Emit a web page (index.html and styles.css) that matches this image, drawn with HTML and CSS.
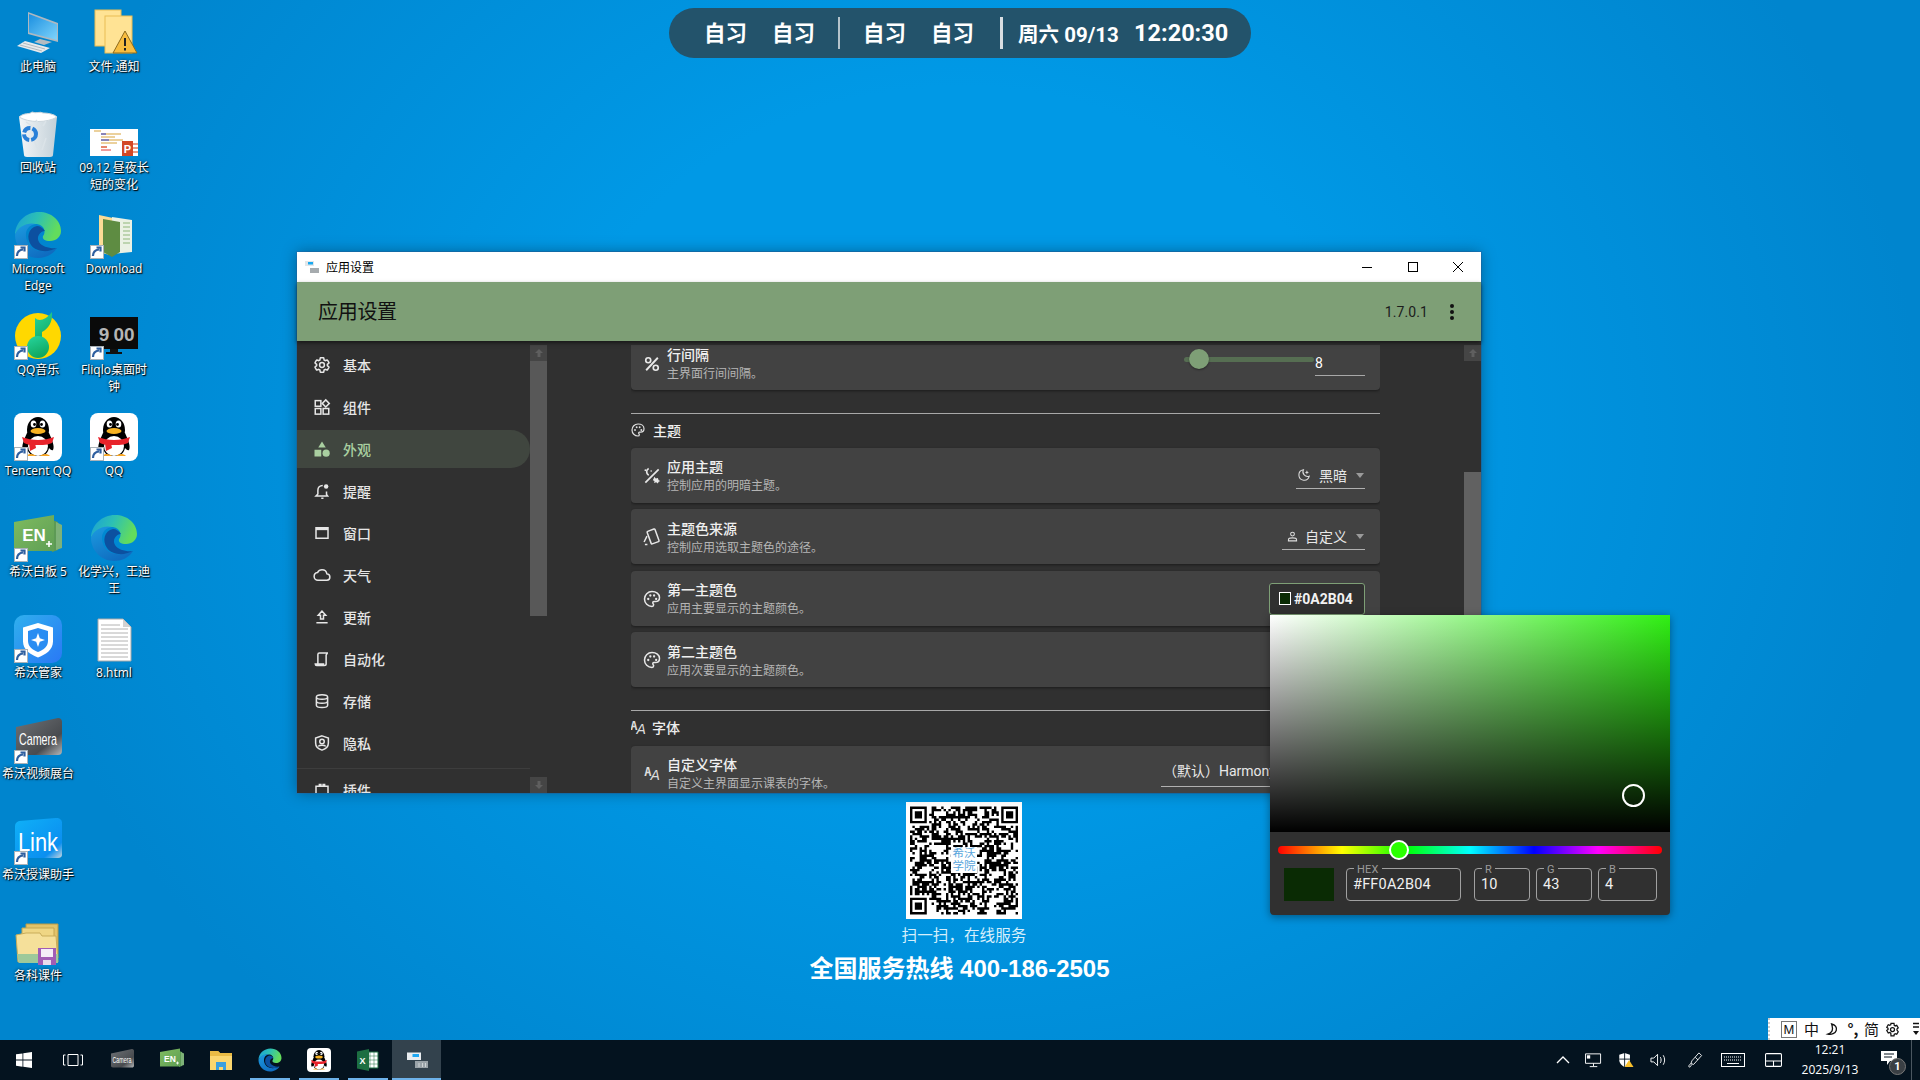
FILE: index.html
```html
<!DOCTYPE html>
<html lang="zh-CN">
<head>
<meta charset="utf-8">
<title>应用设置</title>
<link rel="stylesheet" href="styles.css">
</head>
<body>
<svg class="sprite" aria-hidden="true">
<defs>
<linearGradient id="gEdgeTop" x1="0" y1="0" x2="1" y2="0.3"><stop offset="0" stop-color="#1a9fd8"/><stop offset="0.5" stop-color="#2cc0b4"/><stop offset="1" stop-color="#63dc5c"/></linearGradient>
<linearGradient id="gEdgeLow" x1="0" y1="0" x2="0.6" y2="1"><stop offset="0" stop-color="#1c9be0"/><stop offset="1" stop-color="#0f6cc0"/></linearGradient>
<linearGradient id="gScreen" x1="0" y1="0" x2="1" y2="1"><stop offset="0" stop-color="#1a8fe0"/><stop offset="1" stop-color="#7fd4fb"/></linearGradient>
<linearGradient id="gNote" x1="0" y1="0" x2="0.4" y2="1"><stop offset="0" stop-color="#26d6a0"/><stop offset="1" stop-color="#11a860"/></linearGradient>
<linearGradient id="gShield" x1="0" y1="0" x2="1" y2="1"><stop offset="0" stop-color="#2fb0ee"/><stop offset="1" stop-color="#2a78f5"/></linearGradient>
<linearGradient id="gCam" x1="0" y1="0" x2="1" y2="1"><stop offset="0" stop-color="#6e7276"/><stop offset="0.7" stop-color="#484b4f"/><stop offset="1" stop-color="#b5b7b8"/></linearGradient>
<linearGradient id="gLink" x1="0" y1="0" x2="1" y2="1"><stop offset="0" stop-color="#0fb1f8"/><stop offset="0.8" stop-color="#0b8ff0"/><stop offset="1" stop-color="#c7d5de"/></linearGradient>
<linearGradient id="gEn" x1="0" y1="0" x2="1" y2="1"><stop offset="0" stop-color="#7fbb5f"/><stop offset="1" stop-color="#5f9f55"/></linearGradient>
<linearGradient id="gBin" x1="0" y1="0" x2="1" y2="0"><stop offset="0" stop-color="#f3f6f8"/><stop offset="1" stop-color="#c3d0d8"/></linearGradient>

<symbol id="edge" viewBox="0 0 48 48">
<path fill="url(#gEdgeTop)" d="M1 24C1 11 12 1 25 1c12 0 22 8 22 19 0 6-5 10-11 10-5 0-8-2-7-5 3-3 2-11-6-12C12 12 3 18 1 24z"/>
<path fill="url(#gEdgeLow)" d="M1 24c3-9 13-13 21-11-9 1-12 9-9 17 3 9 15 14 30 7-4 7-12 10-19 10C11 47 1 36 1 24z"/>
<path fill="#0c50a0" d="M23 15c-9 2-11 12-6 19 5 7 17 8 26 3-6 1-15-1-18-6-3-5 1-11 6-11-2-3-5-5-8-5z"/>
</symbol>
<symbol id="lnk" viewBox="0 0 48 48">
<rect x="0.5" y="34.5" width="13" height="13" fill="#fff" stroke="#a9b2b8"/>
<path d="M3 45c0-4 2-6 6-6.500M6.500 36.500h4v4" fill="none" stroke="#2f5f9f" stroke-width="2.200"/>
</symbol>
<symbol id="pc" viewBox="0 0 48 48">
<polygon points="14,3 44,14 44,33 14,25" fill="#aeb8c0"/>
<polygon points="15,5 43,15.500 43,31 15,23.500" fill="url(#gScreen)"/>
<polygon points="26,30 38,33 30,36 20,33" fill="#b4bcc2"/>
<polygon points="11,32 36,39 27,44 3,37" fill="#e6eaed"/>
<path d="M9 34l22 6M6 36l22 6" stroke="#a3acb3" stroke-width="0.800"/>
</symbol>
<symbol id="notice" viewBox="0 0 48 48">
<rect x="5" y="1" width="26" height="36" fill="#ffe394" stroke="#e9bd55"/>
<rect x="15" y="7" width="27" height="37" fill="#ffe394" stroke="#e9bd55"/>
<polygon points="35,22 47,44 23,44" fill="#f7bd40" stroke="#8d6a1b"/>
<rect x="34" y="29" width="2" height="8" fill="#222"/><rect x="34" y="39" width="2" height="2.500" fill="#222"/>
</symbol>
<symbol id="bin" viewBox="0 0 48 48">
<path d="M5 7h38l-4 38c0 1-1 2-3 2H13c-2 0-3-1-3-2z" fill="url(#gBin)"/>
<path d="M5 7c6-5 10-2 13-5 4 2 8-1 11 1 5 0 11 1 14 4-10 6-28 6-38 0z" fill="#fff" stroke="#ccd6dc"/>
<path d="M12 12l6 4M22 10l4 6M32 11l-3 5M20 30l4 10M32 28l-4 12" stroke="#dbe3e8" stroke-width="1.500"/>
<circle cx="16" cy="24" r="6" fill="none" stroke="#2a80d8" stroke-width="4" stroke-dasharray="8 2"/>
</symbol>
<symbol id="ppt" viewBox="0 0 48 48">
<rect x="0" y="19" width="48" height="27" fill="#fff"/>
<path d="M4 21h7M11 24h20M11 27h14M11 30h22M11 33h16M11 37h6" stroke="#d7a33a" stroke-width="1"/>
<path d="M11 24h5M11 30h8" stroke="#2838d0" stroke-width="1"/>
<path d="M11 37h6M11 40h10" stroke="#e23a3a" stroke-width="1"/>
<rect x="32" y="31" width="11" height="15" fill="#d24726"/>
<path d="M43 34h5M43 38h5M43 42h5" stroke="#e67b5c" stroke-width="1.500"/>
<text x="37.500" y="43" class="svg-p">P</text>
</symbol>
<symbol id="dl" viewBox="0 0 48 48">
<path d="M9 4l14 3v38L9 41z" fill="#fbdc96"/>
<path d="M22 6l20 3v32l-20 2z" fill="#eaf1e4"/>
<path d="M13 8l17 3v30l-8 5-9-5z" fill="#5e8c42"/>
<path d="M33 12h7M33 16h7M33 20h7M33 24h7M33 28h7M33 32h7" stroke="#8fb77a" stroke-width="1"/>
</symbol>
<symbol id="qqm" viewBox="0 0 48 48">
<circle cx="24" cy="24" r="23" fill="#ffd800"/>
<path d="M21 6c4 4 11 2 17-6 1 10-4 17-10 20v14h-7z" fill="url(#gNote)"/>
<circle cx="24" cy="35" r="11" fill="url(#gNote)"/>
</symbol>
<symbol id="fliq" viewBox="0 0 48 48">
<rect x="0" y="5" width="48" height="32" fill="#0a0a0a"/>
<text x="14" y="29" class="svg-fl">9</text><text x="34" y="29" class="svg-fl">00</text>
<rect x="20" y="37" width="8" height="3" fill="#111"/><rect x="16" y="40" width="16" height="2" fill="#111"/>
</symbol>
<symbol id="qq" viewBox="0 0 48 48">
<rect width="48" height="48" rx="8" fill="#fff"/>
<ellipse cx="24" cy="17" rx="11" ry="13" fill="#000"/>
<path d="M13 20c-3 7-6 13-4 17 1 1 3-1 4-2 1 5 4 8 11 8s10-3 11-8c1 1 3 3 4 2 2-4-1-10-4-17z" fill="#000"/>
<ellipse cx="24" cy="33" rx="10" ry="10" fill="#fff"/>
<path d="M8 24c10 4 22 4 32 0l-2 6c-3 1-6 2-9 2h-10c-3 0-7-1-9-2z" fill="#e8232b"/>
<path d="M15 30l1 8 6-3-1-5z" fill="#e8232b"/>
<ellipse cx="24" cy="18" rx="7.500" ry="3" fill="#f8b323"/>
<ellipse cx="19.500" cy="11" rx="2.800" ry="3.600" fill="#fff"/><ellipse cx="28.500" cy="11" rx="2.800" ry="3.600" fill="#fff"/>
<circle cx="20.500" cy="11.500" r="1.400" fill="#000"/><circle cx="27.500" cy="11.500" r="1.400" fill="#000"/>
<path d="M12 43c3-3 8-2 10 0zM26 43c2-2 7-3 10 0z" fill="#f8a623"/>
</symbol>
<symbol id="en" viewBox="0 0 48 48">
<path d="M38 6l6 2v28l-6 2z" fill="#5d9a55"/><path d="M42 8l6 3v23l-6 2z" fill="#7eb278"/>
<path d="M0 8L40 1v36H0z" fill="url(#gEn)"/>
<text x="20" y="27" class="svg-en">EN</text>
<path d="M35 33v-6M32 30h6" stroke="#fff" stroke-width="1.600"/>
</symbol>
<symbol id="shield" viewBox="0 0 48 48">
<rect width="48" height="48" rx="10" fill="url(#gShield)"/>
<path d="M24 8l15 4.500v14c0 8-7 13-15 16-8-3-15-8-15-16v-14z" fill="#fff"/>
<path d="M24 13l10 3v10c0 6-5 9-10 11-5-2-10-5-10-11V16z" fill="#2a8df2"/>
<path d="M24 18l1.800 5.200 5.200 1.800-5.200 1.800L24 32l-1.800-5.200-5.200-1.800 5.200-1.800z" fill="#fff"/>
</symbol>
<symbol id="html" viewBox="0 0 48 48">
<path d="M8 4h25l8 8v34H8z" fill="#fff" stroke="#a8a8a8"/>
<path d="M33 4v8h8z" fill="#d2d2d2"/>
<path d="M11 10h19M11 14h27M11 18h27M11 22h27M11 26h27M11 30h27M11 34h27M11 38h27M11 42h27" stroke="#b2b2b2"/>
</symbol>
<symbol id="cam" viewBox="0 0 48 48">
<path d="M2 11L44 2c3 0 4 2 4 4v29c0 3-2 4-4 4H6c-3 0-4-2-4-4z" fill="url(#gCam)"/>
<text x="24" y="29" class="svg-cam" textLength="38" lengthAdjust="spacingAndGlyphs">Camera</text>
</symbol>
<symbol id="link" viewBox="0 0 48 48">
<path d="M1 9c0-3 2-4 4-5L42 1c4 0 6 2 6 5v32c0 2-2 3-4 3H5c-2 0-4-2-4-4z" fill="url(#gLink)"/>
<text x="24" y="34" class="svg-link" textLength="40" lengthAdjust="spacingAndGlyphs">Link</text>
</symbol>
<symbol id="stack" viewBox="0 0 48 48">
<path d="M12 6h32v34H12z" fill="#e2c36a" stroke="#b99a45"/>
<path d="M8 10h32v32H8z" fill="#efd684" stroke="#c4a650"/>
<path d="M2 17l10-2h14l2 3h14l2 26H4z" fill="#f5e09a" stroke="#c9ad5a"/>
<path d="M3 36h41v9H5z" fill="#9dc99a"/>
<rect x="24" y="30" width="18" height="17" fill="#a15db5"/>
<rect x="27" y="31" width="12" height="8" fill="#f4edf7"/><rect x="29" y="42" width="8" height="5" fill="#e9dcec"/>
</symbol>
<symbol id="xls" viewBox="0 0 48 48">
<path d="M22 8h22v32H22z" fill="#fff" stroke="#1d6f42" stroke-width="2"/>
<path d="M28 8v32M36 8v32M22 16h22M22 24h22M22 32h22" stroke="#1d6f42"/>
<path d="M2 7l24-5v44L2 41z" fill="#1d6f42"/>
<text x="13" y="31" class="svg-x">X</text>
</symbol>
<symbol id="cfg" viewBox="0 0 48 48">
<rect x="4" y="9" width="28" height="15" fill="#e9edf0"/><rect x="15" y="12" width="13" height="6" fill="#1ea7f2"/>
<rect x="20" y="26" width="26" height="14" fill="#9aa3a9"/>
<path d="M28 30v8M35 30v8M41 30v8" stroke="#ced3d6" stroke-width="2"/>
</symbol>
<symbol id="palette" viewBox="0 0 24 24">
<path fill="none" stroke="currentColor" stroke-width="1.800" d="M12 3C7 3 3 7 3 12s4 9 9 9c1.200 0 2-.9 2-2 0-.6-.2-1-.6-1.400-.4-.4-.5-.8-.5-1.100 0-.8.6-1.400 1.400-1.400H16c3 0 5-2.200 5-5 0-4.200-4-7.100-9-7.100z"/>
<circle cx="7.500" cy="12" r="1.400" fill="currentColor"/><circle cx="10" cy="7.800" r="1.400" fill="currentColor"/><circle cx="14.500" cy="7.800" r="1.400" fill="currentColor"/><circle cx="17" cy="12" r="1.400" fill="currentColor"/>
</symbol>
<symbol id="pct" viewBox="0 0 24 24">
<path d="M19 4.500L5 19.500" stroke="currentColor" stroke-width="2.200"/>
<circle cx="7.500" cy="7.500" r="3" fill="none" stroke="currentColor" stroke-width="2"/><circle cx="16.500" cy="16.500" r="3" fill="none" stroke="currentColor" stroke-width="2"/>
</symbol>
</defs>
</svg>

<div class="desktop">
  <div class="icons">
    <div class="d-item d-c1"><svg class="d-ico"><use href="#pc"/></svg><span class="d-label">此电脑</span></div>
    <div class="d-item"><svg class="d-ico"><use href="#notice"/></svg><span class="d-label">文件,通知</span></div>
    <div class="d-item d-c1"><svg class="d-ico"><use href="#bin"/></svg><span class="d-label">回收站</span></div>
    <div class="d-item"><svg class="d-ico"><use href="#ppt"/></svg><span class="d-label">09.12 昼夜长短的变化</span></div>
    <div class="d-item d-c1"><svg class="d-ico"><use href="#edge"/><use href="#lnk"/></svg><span class="d-label">Microsoft Edge</span></div>
    <div class="d-item"><svg class="d-ico"><use href="#dl"/><use href="#lnk"/></svg><span class="d-label">Download</span></div>
    <div class="d-item d-c1"><svg class="d-ico"><use href="#qqm"/><use href="#lnk"/></svg><span class="d-label">QQ音乐</span></div>
    <div class="d-item"><svg class="d-ico"><use href="#fliq"/><use href="#lnk"/></svg><span class="d-label">Fliqlo桌面时钟</span></div>
    <div class="d-item d-c1"><svg class="d-ico"><use href="#qq"/><use href="#lnk"/></svg><span class="d-label">Tencent QQ</span></div>
    <div class="d-item"><svg class="d-ico"><use href="#qq"/><use href="#lnk"/></svg><span class="d-label">QQ</span></div>
    <div class="d-item d-c1"><svg class="d-ico"><use href="#en"/><use href="#lnk"/></svg><span class="d-label">希沃白板 5</span></div>
    <div class="d-item"><svg class="d-ico"><use href="#edge"/></svg><span class="d-label">化学兴，王迪王</span></div>
    <div class="d-item d-c1"><svg class="d-ico"><use href="#shield"/><use href="#lnk"/></svg><span class="d-label">希沃管家</span></div>
    <div class="d-item"><svg class="d-ico"><use href="#html"/></svg><span class="d-label">8.html</span></div>
    <div class="d-item d-c1"><svg class="d-ico"><use href="#cam"/><use href="#lnk"/></svg><span class="d-label">希沃视频展台</span></div>
    <div class="d-item d-c1"><svg class="d-ico"><use href="#link"/><use href="#lnk"/></svg><span class="d-label">希沃授课助手</span></div>
    <div class="d-item d-c1"><svg class="d-ico"><use href="#stack"/></svg><span class="d-label">各科课件</span></div>
  </div>

  <div class="topbar">
    <div class="tb-seg"><span>自习</span><span>自习</span></div>
    <i class="tb-sep"></i>
    <div class="tb-seg"><span>自习</span><span>自习</span></div>
    <i class="tb-sep tb-sep-b"></i>
    <span class="tb-date">周六 09/13</span>
    <span class="tb-time">12:20:30</span>
  </div>

  <div class="promo">
    <div class="qr-box">
      <svg id="qr" class="qr" viewBox="0 0 45 45"><path id="qr-path" d=""/></svg>
      <div class="qr-logo">希沃<br>学院</div>
    </div>
    <div class="promo-sub">扫一扫，在线服务</div>
    <div class="promo-tel">全国服务热线 400-186-2505</div>
  </div>

  <section class="window">
    <div class="titlebar">
      <svg class="tt-ico" viewBox="0 0 16 16"><rect x="1" y="2" width="9" height="5" fill="#e2e6e8"/><rect x="4" y="3" width="5" height="2.500" fill="#18a8f0"/><rect x="6" y="9" width="9" height="5" fill="#a6abae"/></svg>
      <span class="tt-text">应用设置</span>
      <div class="tt-btns">
        <svg class="tt-btn" viewBox="0 0 12 12"><path d="M1 6.500h10" stroke="#000"/></svg>
        <svg class="tt-btn" viewBox="0 0 12 12"><rect x="1.500" y="1.500" width="9" height="9" fill="none" stroke="#000"/></svg>
        <svg class="tt-btn" viewBox="0 0 12 12"><path d="M1 1l10 10M11 1L1 11" stroke="#000"/></svg>
      </div>
    </div>
    <header class="appbar">
      <h1 class="ab-title">应用设置</h1>
      <span class="ab-ver">1.7.0.1</span>
      <svg class="ab-more" viewBox="0 0 6 18"><circle cx="3" cy="3" r="2"/><circle cx="3" cy="9" r="2"/><circle cx="3" cy="15" r="2"/></svg>
    </header>
    <div class="body">
      <nav class="side">
        <div class="nav-list">
          <a class="nav"><svg class="nav-ico" viewBox="0 0 24 24"><path class="ol" d="M19.140 12.940c.04-.3.06-.61.06-.94 0-.32-.02-.64-.07-.94l2.030-1.580c.18-.14.23-.41.12-.61l-1.920-3.320c-.12-.22-.37-.29-.59-.22l-2.390.96c-.5-.38-1.030-.7-1.620-.94l-.36-2.540c-.04-.24-.24-.41-.48-.41h-3.840c-.24 0-.43.17-.47.41l-.36 2.540c-.59.24-1.130.57-1.620.94l-2.390-.96c-.22-.08-.47 0-.59.22L2.740 8.870c-.12.21-.08.47.12.61l2.030 1.580c-.05.3-.09.63-.09.94s.02.64.07.94l-2.030 1.580c-.18.14-.23.41-.12.61l1.920 3.320c.12.22.37.29.59.22l2.390-.96c.5.38 1.030.7 1.620.94l.36 2.540c.05.24.24.41.48.41h3.840c.24 0 .44-.17.47-.41l.36-2.540c.59-.24 1.130-.56 1.620-.94l2.390.96c.22.08.47 0 .59-.22l1.920-3.320c.12-.22.07-.47-.12-.61l-2.010-1.580z"/><circle class="ol" cx="12" cy="12" r="3.200"/></svg><span>基本</span></a>
          <a class="nav"><svg class="nav-ico" viewBox="0 0 24 24"><rect class="ol" x="3" y="3.500" width="7.500" height="7.500"/><path class="ol" d="M17 2.500l4.700 4.700-4.700 4.700-4.700-4.700z"/><rect class="ol" x="3" y="14" width="7.500" height="7.500"/><rect class="ol" x="13.500" y="14" width="7.500" height="7.500"/></svg><span>组件</span></a>
          <a class="nav nav-on"><svg class="nav-ico" viewBox="0 0 24 24"><path d="M12 2l5 8H7z"/><rect x="2" y="13" width="9" height="9"/><circle cx="17.500" cy="17.500" r="4.800"/></svg><span>外观</span></a>
          <a class="nav"><svg class="nav-ico" viewBox="0 0 24 24"><path class="ol" d="M13 4.500c-4 0-6.500 3-6.500 6.500v5L4 18.500h15.500L18 16.500v-4M11 21.500h3"/><circle cx="17.500" cy="6" r="3" class="fl"/></svg><span>提醒</span></a>
          <a class="nav"><svg class="nav-ico" viewBox="0 0 24 24"><rect class="ol" x="4" y="5" width="16" height="14"/><path class="ol thick" d="M4 6.500h16"/></svg><span>窗口</span></a>
          <a class="nav"><svg class="nav-ico nav-ico-w" viewBox="0 0 24 24"><path class="ol" d="M18.500 10.500C18 7 15.300 5 12 5 9.300 5 7.200 6.500 6 8.800 3.300 9.200 1.500 11.400 1.500 14c0 3 2.400 5 5 5h12c2.400 0 4-1.900 4-4.200 0-2.300-1.800-4.200-4-4.300z"/></svg><span>天气</span></a>
          <a class="nav"><svg class="nav-ico" viewBox="0 0 24 24"><path class="ol" d="M12 4L7 9.500h3v5h4v-5h3zM4.500 19.500h15"/></svg><span>更新</span></a>
          <a class="nav"><svg class="nav-ico" viewBox="0 0 24 24"><path class="ol" d="M20 4H8.500C7 4 6.500 5 6.500 6v12.500M20 4c-1.500 0-2 1-2 2.500M15 20.500c1.500 0 2.500-1 2.500-2V6M3 18.500h11v2H5c-1 0-2-1-2-2z"/></svg><span>自动化</span></a>
          <a class="nav"><svg class="nav-ico" viewBox="0 0 24 24"><path class="ol" d="M4.500 6.500C4.500 4.500 8 3.500 12 3.500s7.500 1 7.500 3v11c0 2-3.500 3-7.500 3s-7.500-1-7.500-3zM4.500 6.500c0 2 3.500 3 7.500 3s7.500-1 7.500-3M4.500 12c0 2 3.500 3 7.500 3s7.500-1 7.500-3"/></svg><span>存储</span></a>
          <a class="nav"><svg class="nav-ico" viewBox="0 0 24 24"><path class="ol" d="M12 2.500l8.500 3v6.500c0 5-3.500 8-8.500 9.500-5-1.500-8.500-4.500-8.500-9.500V5.500z"/><circle class="ol" cx="12" cy="10" r="3"/><path class="ol" d="M7 16.500c1.500-2 8.500-2 10 0"/></svg><span>隐私</span></a>
          <hr class="nav-hr">
          <a class="nav"><svg class="nav-ico" viewBox="0 0 24 24"><path class="ol" d="M4 7h4.500V4.500h2V7h3V4.500h2V7H20v14H4z"/></svg><span>插件</span></a>
        </div>
      </nav>
      <div class="sbar sbar-side">
        <span class="sb-btn"><svg viewBox="0 0 10 10"><path d="M5 1L1 5h2.500v4h3V5H9z"/></svg></span>
        <span class="sb-thumb sb-thumb-side"></span>
        <span class="sb-fill"></span>
        <span class="sb-btn"><svg viewBox="0 0 10 10"><path d="M5 9L1 5h2.500V1h3v4H9z"/></svg></span>
      </div>
      <main class="main">
        <div class="col">
          <div class="card card-cut">
            <svg class="c-ico" viewBox="0 0 24 24"><use href="#pct"/></svg>
            <div class="c-text"><div class="c-title">行间隔</div><div class="c-desc">主界面行间间隔。</div></div>
            <div class="slider"><span class="sl-track"><i class="sl-thumb"></i></span></div>
            <div class="numbox">8</div>
          </div>
          <div class="sect"><svg class="s-ico" viewBox="0 0 24 24"><use href="#palette"/></svg><span>主题</span></div>
          <div class="cards">
            <div class="card">
              <svg class="c-ico" viewBox="0 0 24 24"><path d="M20 4L4 20" stroke="currentColor" stroke-width="2"/><path d="M8 3a4.500 4.500 0 0 0 0 8" fill="none" stroke="currentColor" stroke-width="2"/><path d="M15 13l1.500 2 2.500-.5 1 2.500 2 1-2 1-1 2-2-1.500-2.500 1 .5-2.500-2-1z" fill="currentColor"/><circle cx="4" cy="5" r="1" fill="currentColor"/><circle cx="11" cy="6" r="1" fill="currentColor"/></svg>
              <div class="c-text"><div class="c-title">应用主题</div><div class="c-desc">控制应用的明暗主题。</div></div>
              <div class="drop drop-a"><svg class="dr-ico" viewBox="0 0 24 24"><path d="M11 3a9 9 0 1 0 10 11A8 8 0 0 1 11 3z" fill="none" stroke="currentColor" stroke-width="1.800"/><path d="M17 4l1 2.500 2.500 1-2.500 1-1 2.500-1-2.500-2.500-1 2.500-1z" fill="currentColor"/></svg><span>黑暗</span><i class="dr-arrow"></i></div>
            </div>
            <div class="card">
              <svg class="c-ico" viewBox="0 0 24 24"><rect x="8.500" y="3.500" width="10" height="16" rx="1" transform="rotate(-20 13 12)" fill="none" stroke="currentColor" stroke-width="1.800"/><path d="M6 11l-3.500 7M3.500 21h3" fill="none" stroke="currentColor" stroke-width="1.800"/></svg>
              <div class="c-text"><div class="c-title">主题色来源</div><div class="c-desc">控制应用选取主题色的途径。</div></div>
              <div class="drop drop-b"><svg class="dr-ico" viewBox="0 0 24 24"><circle cx="12" cy="7.500" r="3.500" fill="none" stroke="currentColor" stroke-width="2"/><path d="M4.500 20v-2c0-2 4-3.500 7.500-3.500s7.500 1.500 7.500 3.500v2z" fill="none" stroke="currentColor" stroke-width="2"/></svg><span>自定义</span><i class="dr-arrow"></i></div>
            </div>
            <div class="card">
              <svg class="c-ico" viewBox="0 0 24 24"><use href="#palette"/></svg>
              <div class="c-text"><div class="c-title">第一主题色</div><div class="c-desc">应用主要显示的主题颜色。</div></div>
              <div class="colorbtn"><i class="cb-sw"></i><span>#0A2B04</span></div>
            </div>
            <div class="card">
              <svg class="c-ico" viewBox="0 0 24 24"><use href="#palette"/></svg>
              <div class="c-text"><div class="c-title">第二主题色</div><div class="c-desc">应用次要显示的主题颜色。</div></div>
            </div>
          </div>
          <div class="sect sect-b"><span class="aa aa-s"><b>A</b><em>A</em></span><span>字体</span></div>
          <div class="card">
            <span class="aa c-ico"><b>A</b><em>A</em></span>
            <div class="c-text"><div class="c-title">自定义字体</div><div class="c-desc">自定义主界面显示课表的字体。</div></div>
            <div class="drop drop-c"><span>（默认）HarmonyOS Sans</span></div>
          </div>
        </div>
        <div class="sbar sbar-main">
          <span class="sb-btn"><svg viewBox="0 0 10 10"><path d="M5 1L1 5h2.500v4h3V5H9z"/></svg></span>
          <span class="sb-gap"></span>
          <span class="sb-thumb sb-thumb-main"></span>
        </div>
      </main>
    </div>
  </section>

  <div class="picker">
    <div class="pk-sv"><i class="pk-cursor"></i></div>
    <div class="pk-hue"><i class="pk-hue-thumb"></i></div>
    <div class="pk-row">
      <i class="pk-swatch"></i>
      <div class="pk-field pk-hex"><label>HEX</label>#FF0A2B04</div>
      <div class="pk-rgb">
        <div class="pk-field pk-n"><label>R</label>10</div>
        <div class="pk-field pk-n"><label>G</label>43</div>
        <div class="pk-field pk-n pk-b"><label>B</label>4</div>
      </div>
    </div>
  </div>

  <div class="ime">
    <span class="ime-m">M</span><span class="ime-i">中</span>
    <svg class="ime-svg" viewBox="0 0 16 16"><path d="M7 2c4 1 6 4 5 7-1 3-5 5-9 4 3-1 5-3 5-6 0-2-.5-3.500-1-5z" fill="none" stroke="#111" stroke-width="1.400"/></svg>
    <span class="ime-i ime-p">°,</span><span class="ime-i ime-j">简</span>
    <svg class="ime-svg" viewBox="0 0 24 24"><path fill="none" stroke="#111" stroke-width="2" d="M19.140 12.940c.04-.3.06-.61.06-.94s-.02-.64-.07-.94l2.030-1.580-2.390-4.150-2.390.96c-.5-.38-1.030-.7-1.620-.94L14.400 2h-4.800l-.36 2.350c-.59.24-1.130.57-1.620.94l-2.390-.96L2.840 8.480l2.030 1.580c-.05.3-.07.63-.07.94s.02.64.07.94l-2.030 1.580 2.390 4.150 2.390-.96c.5.38 1.030.7 1.620.94L9.600 22h4.800l.36-2.350c.59-.24 1.130-.56 1.620-.94l2.390.96 2.390-4.150z"/><circle cx="12" cy="12" r="3.200" fill="none" stroke="#111" stroke-width="2"/></svg>
    <svg class="ime-more" viewBox="0 0 8 14"><path d="M1 1.500h6M1 5h6" stroke="#111" stroke-width="1.500"/><path d="M1 9h6l-3 4z" fill="#111"/></svg>
  </div>

  <footer class="taskbar">
    <div class="tk-apps">
      <span class="tk tk-first"><svg class="tk-win" viewBox="0 0 16 16"><path fill="#fff" d="M0 2.300l6.500-.9v6.200H0zM7.300 1.300L16 0v7.600H7.300zM0 8.400h6.500v6.300L0 13.800zM7.300 8.400H16V16l-8.700-1.200z"/></svg></span>
      <span class="tk"><svg class="tk-task" viewBox="0 0 20 14"><path fill="none" stroke="#fff" d="M5 1.500h10v11H5zM2.500 2H.5v10h2M17.500 2h2v10h-2"/></svg></span>
      <span class="tk tk-third"><svg class="tk-i"><use href="#cam"/></svg></span>
      <span class="tk"><svg class="tk-i"><use href="#en"/></svg></span>
      <span class="tk"><svg class="tk-i" viewBox="0 0 24 24"><path d="M1 3h8l2 2h12v17H1z" fill="#fbd66f"/><path d="M1 3h8l2 2h12v3H1z" fill="#eabb45"/><path d="M7 14h10v8h-3v-3h-4v3H7z" fill="#3a9fe0"/></svg></span>
      <span class="tk tk-run"><svg class="tk-i"><use href="#edge"/></svg></span>
      <span class="tk tk-run"><svg class="tk-i"><use href="#qq"/></svg></span>
      <span class="tk tk-run"><svg class="tk-i"><use href="#xls"/></svg></span>
      <span class="tk tk-act"><svg class="tk-i"><use href="#cfg"/></svg></span>
    </div>
    <div class="tray">
      <span class="tr tr31"><svg class="tr-s" viewBox="0 0 16 16"><path d="M2 11l6-6 6 6" fill="none" stroke="#fff" stroke-width="1.300"/></svg></span>
      <span class="tr tr31"><svg class="tr-m" viewBox="0 0 18 16"><path d="M.5 1.500h16v10H.5zM9 11.500v3M5 15h8" fill="none" stroke="#fff"/><rect x="2" y="3" width="3.500" height="3.500" fill="#fff"/></svg></span>
      <span class="tr tr33"><svg class="tr-m" viewBox="0 0 18 18"><path d="M8 1l6 2v6c0 4-3 6-6 8-3-2-6-4-6-8V3z" fill="#fff"/><path d="M8 1v16M2 8h12" stroke="#04131f"/><path d="M13 9l5 8H8z" fill="#f9c02c"/></svg></span>
      <span class="tr tr33"><svg class="tr-m" viewBox="0 0 18 16"><path d="M1 6h3l4-4v12l-4-4H1zM11 5c1 2 1 4 0 6M14 3c2 3 2 7 0 10" fill="none" stroke="#fff"/></svg></span>
      <span class="tr tr38"><svg class="tr-m" viewBox="0 0 18 18"><path d="M14 1l3 3-9 10-3-1 1-3zM5 13c-2 1-3 3-2 4 2 0 2-2 3-3M10 6l3 3" fill="none" stroke="#fff"/></svg></span>
      <span class="tr tr40"><svg class="tr-k" viewBox="0 0 24 14"><rect x=".5" y=".5" width="23" height="13" fill="none" stroke="#fff"/><path d="M3 4h18M3 7h18" stroke="#fff" stroke-dasharray="1 1"/><path d="M6 10.500h12" stroke="#fff"/></svg></span>
      <span class="tr tr40"><svg class="tr-m" viewBox="0 0 16 13"><path d="M1.500.5h13a1 1 0 0 1 1 1v10a1 1 0 0 1-1 1h-13a1 1 0 0 1-1-1v-10a1 1 0 0 1 1-1zM.5 7.500h15M8 7.500v5" fill="none" stroke="#fff"/></svg></span>
      <div class="clock"><span>12:21</span><span>2025/9/13</span></div>
      <span class="tr tr44 notif"><svg class="tr-n" viewBox="0 0 16 14"><path d="M0 0h16v10H9l-3 4v-4H0z" fill="#fff"/><path d="M3 3h10M3 6h8" stroke="#04131f"/></svg><b class="badge">1</b></span>
      <i class="show-desk"></i>
    </div>
  </footer>
</div>
<script src="script.js"></script>
</body>
</html>
```
FILE: styles.css
```css
* { box-sizing: border-box; }
html, body { margin: 0; padding: 0; width: 1920px; height: 1080px; overflow: hidden; }
body { font-family: Roboto, "Noto Sans CJK SC", sans-serif; font-size: 14px; }
.sprite { position: absolute; width: 0; height: 0; }
.svg-p { font: 700 11px "Liberation Sans", sans-serif; fill: #fff; text-anchor: middle; }
.svg-fl { font: 700 19px "Liberation Sans", sans-serif; fill: #b5b5b5; text-anchor: middle; }
.svg-en { font: 700 17px "Liberation Sans", sans-serif; fill: #fff; text-anchor: middle; }
.svg-cam { font: 400 17px "Liberation Sans", sans-serif; fill: #fff; text-anchor: middle; }
.svg-link { font: 400 26px "Liberation Sans", sans-serif; fill: #fff; text-anchor: middle; }
.svg-x { font: 700 18px "Liberation Sans", sans-serif; fill: #fff; text-anchor: middle; }

.desktop {
  position: relative; width: 1920px; height: 1080px; overflow: hidden;
  background: radial-gradient(ellipse 50% 76% at 50% 40%, #0099e6 42%, #0085ce 100%);
}

/* desktop icons */
.icons {
  position: absolute; left: 0; top: 9px;
  display: grid; grid-template-columns: 76px 76px; grid-auto-rows: 101px;
}
.d-item { display: flex; flex-direction: column; align-items: center; }
.d-c1 { grid-column: 1; }
.d-ico { width: 48px; height: 48px; flex: none; }
.d-label {
  width: 76px; margin-top: 1px; text-align: center; color: #fff;
  font: 400 12px/17px "Open Sans", "Noto Sans CJK SC", sans-serif;
  text-shadow: 1px 1px 1px #000, 0 0 3px rgba(0,0,0,.8);
}

/* top schedule bar */
.topbar {
  position: absolute; left: 669px; top: 8px; width: 582px; height: 50px;
  border-radius: 25px; background: #23536b; color: #fff;
  display: flex; align-items: center; padding-left: 35px; font-weight: 700;
}
.tb-seg { display: flex; gap: 25px; font-size: 21.500px; line-height: 30px; padding-top: 1px; }
.tb-sep { width: 2px; height: 32px; background: #b4c3cb; margin: 0 23px; }
.tb-sep-b { width: 3px; background: #d8dee2; margin: 0 15px 0 26px; }
.tb-date { font-size: 20.500px; width: 116px; white-space: nowrap; margin-top: -1px; }
.tb-time { font-size: 23.500px; }

/* promo */
.promo {
  position: absolute; left: 808px; top: 802px; width: 303px;
  display: flex; flex-direction: column; align-items: center; color: #fff;
}
.qr-box { position: relative; width: 116px; height: 117px; background: #fff; padding: 4px; margin-left: 9px; }
.qr { display: block; width: 108px; height: 109px; fill: #000; }
.qr-logo {
  position: absolute; left: 45px; top: 45px; width: 26px; height: 26px; background: #fff;
  color: #5aa6dc; font-size: 11.500px; line-height: 13px; text-align: center;
}
.promo-sub { margin: 7px 0 0 9px; font-size: 15.600px; line-height: 21px; color: #d6effc; white-space: nowrap; }
.promo-tel { margin-top: 7px; font: 700 24px/30px "Liberation Sans", "Noto Sans CJK SC", sans-serif; white-space: nowrap; }

/* window */
.window {
  position: absolute; left: 297px; top: 252px; width: 1184px; height: 541px;
  display: flex; flex-direction: column; background: #303030;
  box-shadow: 0 0 14px rgba(0,0,0,.35), 0 0 0 1px #1480c8;
}
.titlebar { height: 30px; flex: none; background: #fff; display: flex; align-items: center; padding-left: 7px; color: #000; }
.tt-ico { width: 16px; height: 16px; }
.tt-text { margin: -2px 0 0 6px; font: 400 12px "Noto Sans CJK SC", sans-serif; }
.tt-btns { margin-left: auto; display: flex; padding-right: 17px; }
.tt-btn { width: 12px; height: 12px; margin-left: 33.500px; margin-top: -1px; }
.appbar {
  height: 59px; flex: none; background: #7e9f76; display: flex; align-items: center; padding: 0 26px 0 21px;
  box-shadow: 0 2px 4px rgba(0,0,0,.5); position: relative; z-index: 2; color: #111;
}
.ab-title { margin: -2px 0 0; font-size: 20px; font-weight: 400; font-family: "Noto Sans CJK SC", sans-serif; letter-spacing: -.3px; }
.ab-ver { margin-left: auto; font-size: 14px; color: #1c1c1c; letter-spacing: .1px; }
.ab-more { width: 6px; height: 18px; margin-left: 21px; fill: #111; }

.body { flex: 1; display: flex; min-height: 0; }
.side { width: 233px; flex: none; overflow: hidden; }
.nav-list { padding-top: 5px; display: flex; flex-direction: column; gap: 4px; }
.nav {
  height: 38px; flex: none; display: flex; align-items: center; padding-left: 16px; gap: 12px;
  color: #e6e6e6; font-weight: 500; font-size: 14px; border-radius: 0 19px 19px 0;
}
.nav-on { background: #40463f; color: #a9cfa0; }
.nav-ico { width: 18px; height: 18px; flex: none; fill: currentColor; }
.ol { fill: none; stroke: currentColor; stroke-width: 2; }
.thick { stroke-width: 3.400; }
.fl { fill: currentColor; stroke: none; }
.nav-hr { width: 100%; height: 1px; border: 0; background: #3d3d3d; margin: 2px 0 -2px; }

.sbar { width: 17px; flex: none; display: flex; flex-direction: column; margin-top: 4px; }
.sb-btn { height: 16px; flex: none; background: #454545; display: flex; align-items: center; justify-content: center; }
.sb-btn svg { width: 10px; height: 10px; fill: #5f5f5f; }
.sb-thumb-side { height: 255px; flex: none; background: #585858; }
.sb-fill { flex: 1; }
.sb-gap { height: 111px; flex: none; }
.sb-thumb-main { height: 240px; flex: none; background: #616161; }

.main { flex: 1; display: flex; min-width: 0; }
.col { width: 749px; margin: 4px 84px 0 84px; overflow: hidden; flex: none; padding-bottom: 4px; }
.card {
  height: 55px; background: #424242; border-radius: 4px; display: flex; align-items: center;
  padding-left: 11px; box-shadow: 0 1px 3px rgba(0,0,0,.45); color: #eee; position: relative;
}
.card-cut { margin-top: -9px; height: 54px; }
.cards { display: flex; flex-direction: column; gap: 6.500px; }
.c-ico { width: 20px; height: 20px; flex: none; color: #e8e8e8; margin-top: 1px; }
.c-text { margin-left: 5px; min-width: 0; padding-top: 4px; }
.c-title { font-size: 14px; line-height: 17px; font-weight: 500; color: #f0f0f0; }
.c-desc { font-size: 12px; line-height: 17px; color: #b5b5b5; margin-top: 2px; }
.sect {
  margin-top: 22.500px; border-top: 1px solid #a8a8a8; height: 35px; display: flex; align-items: center;
  padding-bottom: 1px; gap: 7px; color: #eee; font-weight: 500;
}
.sect-b { height: 36px; padding-bottom: 2px; }
.s-ico { width: 16px; height: 16px; margin-left: -1px; color: #e0e0e0; }
.aa { display: flex; align-items: center; justify-content: center; font: 400 12px/1 "Liberation Sans", sans-serif; color: #ddd; }
.aa b { font-family: "DejaVu Sans Mono", monospace; font-weight: 700; font-size: 12px; margin-top: -3px; }
.aa em { font-size: 14px; margin-top: 3px; margin-left: -1px; }
.aa-s { width: 14px; }

.slider { width: 130px; position: absolute; left: 553px; top: 21px; }
.sl-track { display: block; height: 5px; background: #566e52; border-radius: 3px; position: relative; }
.sl-thumb { position: absolute; left: 5px; top: -8px; width: 20px; height: 20px; border-radius: 50%; background: #7e9f76; box-shadow: 0 1px 2px rgba(0,0,0,.4); }
.numbox {
  position: absolute; left: 684px; top: 9px; width: 50px; height: 31px; border-bottom: 1px solid #a8a8a8;
  font-size: 14px; line-height: 36px; color: #fff;
}
.drop {
  position: absolute; right: 15px; display: flex; align-items: center; height: 27px; border-bottom: 1px solid #b0b0b0;
  font-size: 14px; color: #e8e8e8; top: 14px; white-space: nowrap;
}
.drop-a { width: 69px; padding-left: 1px; gap: 8px; }
.drop-b { width: 83px; padding-left: 2px; gap: 6px; }
.drop-c { width: 204px; overflow: hidden; padding: 0 0 5px 2px; }
.dr-ico { width: 13px; height: 13px; flex: none; margin-left: 2px; color: #ddd; }
.drop-a .dr-ico { width: 14px; height: 14px; margin-left: 0; }
.dr-arrow { position: absolute; right: 1px; top: 11px; border: 4px solid transparent; border-top: 5px solid #9a9a9a; border-bottom: 0; }
.colorbtn {
  position: absolute; right: 15px; top: 12px; width: 96px; height: 32px; background: #303030; border: 1px solid #7e9f76; border-radius: 3px;
  display: flex; align-items: center; padding-left: 9px; gap: 3px; font-weight: 700; font-size: 14px; color: #f2f2f2;
}
.cb-sw { width: 12px; height: 13px; background: #0a2b04; border: 1px solid #fff; flex: none; }

/* color picker */
.picker {
  position: absolute; left: 1270px; top: 615px; width: 400px; height: 300px; background: #303030;
  border-radius: 0 0 4px 4px; box-shadow: 0 2px 8px rgba(0,0,0,.4); display: flex; flex-direction: column; color: #eee;
}
.pk-sv {
  height: 217px; flex: none; position: relative;
  background: linear-gradient(to top, #000, rgba(0,0,0,0)), linear-gradient(to right, #fff, #30f014);
}
.pk-cursor { position: absolute; left: 352px; top: 169px; width: 23px; height: 23px; border: 2px solid #fff; border-radius: 50%; }
.pk-hue {
  height: 8px; margin: 14px 8px 0; border-radius: 4px; position: relative; flex: none;
  background: linear-gradient(to right, #f00 0%, #ff0 16.66%, #0f0 33.33%, #0ff 50%, #00f 66.66%, #f0f 83.33%, #f00 100%);
}
.pk-hue-thumb { position: absolute; left: 111px; top: -6px; width: 20px; height: 20px; border-radius: 50%; background: #2bff00; border: 2px solid #fff; }
.pk-row { display: flex; margin: 14px 13px 0 14px; align-items: flex-start; }
.pk-swatch { width: 50px; height: 33px; background: #0a2b04; flex: none; }
.pk-field {
  position: relative; height: 33px; border: 1px solid #a0a0a0; border-radius: 4px; padding-left: 6px;
  font-size: 14.500px; line-height: 32px; color: #f0f0f0;
}
.pk-field label { position: absolute; left: 7px; top: -5px; padding: 0 3px; background: #303030; font-size: 11px; line-height: 11px; color: #9a9a9a; }
.pk-hex { width: 116px; margin-left: 12px; letter-spacing: .2px; }
.pk-rgb { display: flex; gap: 6px; margin-left: 13px; }
.pk-n { width: 56px; }
.pk-b { width: 59px; }

/* ime toolbar */
.ime {
  position: absolute; right: 0; top: 1018px; width: 152px; height: 22px; background: #fff;
  display: flex; align-items: center; padding-left: 11px; color: #111; border-left: 2px dotted #ccc;
}
.ime-m { width: 17px; height: 17px; border: 1px solid #777; font: 400 13px/15px "Liberation Sans", sans-serif; text-align: center; }
.ime-i { font-size: 15px; line-height: 22px; margin-left: 7px; width: 15px; text-align: center; font-family: "Noto Sans CJK SC", sans-serif; }
.ime-p { margin-left: 6px; font-weight: 700; white-space: nowrap; }
.ime-j { margin-left: 4px; }
.ime-svg { width: 15px; height: 15px; margin-left: 6px; flex: none; }
.ime-more { width: 8px; height: 14px; margin-left: 12px; flex: none; }

/* taskbar */
.taskbar {
  position: absolute; left: 0; right: 0; bottom: 0; height: 40px; background: #04131f; display: flex; justify-content: space-between;
}
.tk-apps { display: flex; }
.tk { width: 49px; height: 40px; display: flex; align-items: center; justify-content: center; position: relative; }
.tk-first { width: 48px; }
.tk-third { width: 50px; }
.tk-win { width: 16px; height: 16px; }
.tk-task { width: 20px; height: 14px; }
.tk-i { width: 24px; height: 24px; }
.tk-run::after { content: ""; position: absolute; left: 5px; right: 4px; bottom: 0; height: 2px; background: #6db2ea; }
.tk-act { background: #33424d; }
.tk-act::after { content: ""; position: absolute; left: 0; right: 0; bottom: 0; height: 2px; background: #6db2ea; }
.tray { display: flex; align-items: center; color: #fff; }
.tr { display: flex; align-items: center; justify-content: center; height: 40px; position: relative; }
.tr31 { width: 31px; } .tr33 { width: 33px; } .tr38 { width: 38px; } .tr40 { width: 40px; } .tr44 { width: 44px; }
.tr-s { width: 16px; height: 16px; }
.tr-m { width: 17px; height: 16px; }
.tr-k { width: 24px; height: 14px; }
.tr-n { width: 16px; height: 14px; margin-top: -5px; }
.clock { width: 74px; display: flex; flex-direction: column; align-items: center; font: 400 12px/20px "Open Sans", sans-serif; }
.badge {
  position: absolute; left: 22px; top: 18px; width: 17px; height: 17px; border-radius: 50%; background: #3a3f44; border: 1px solid #777;
  font: 700 11px/15px Roboto, sans-serif; text-align: center; color: #fff;
}
.show-desk { width: 9px; height: 40px; border-left: 1px solid #4a5660; }
```
FILE: script.js
```js
// Fills the contact QR code's 45x45 module grid.
(function () {
  var n = 45, seed = 20250913, cells = [];
  function rnd() { seed = (seed * 1664525 + 1013904223) >>> 0; return (seed >>> 16) / 65536; }
  function inFinder(x, y) { return (x < 8 && y < 8) || (x > 36 && y < 8) || (x < 8 && y > 36); }
  for (var y = 0; y < n; y++) {
    cells[y] = [];
    for (var x = 0; x < n; x++) {
      var prev = x > 0 ? cells[y][x - 1] : 0, up = y > 0 ? cells[y - 1][x] : 0;
      cells[y][x] = !inFinder(x, y) && rnd() < (prev || up ? 0.58 : 0.4) ? 1 : 0;
    }
  }
  function finder(ox, oy) {
    for (var j = 0; j < 7; j++) for (var i = 0; i < 7; i++) {
      var edge = i === 0 || j === 0 || i === 6 || j === 6, core = i > 1 && i < 5 && j > 1 && j < 5;
      cells[oy + j][ox + i] = edge || core ? 1 : 0;
    }
  }
  finder(0, 0); finder(38, 0); finder(0, 38);
  var d = "";
  cells.forEach(function (row, r) {
    row.forEach(function (v, c) { if (v) d += "M" + c + " " + r + "h1v1h-1z"; });
  });
  document.getElementById("qr-path").setAttribute("d", d);
})();
```
